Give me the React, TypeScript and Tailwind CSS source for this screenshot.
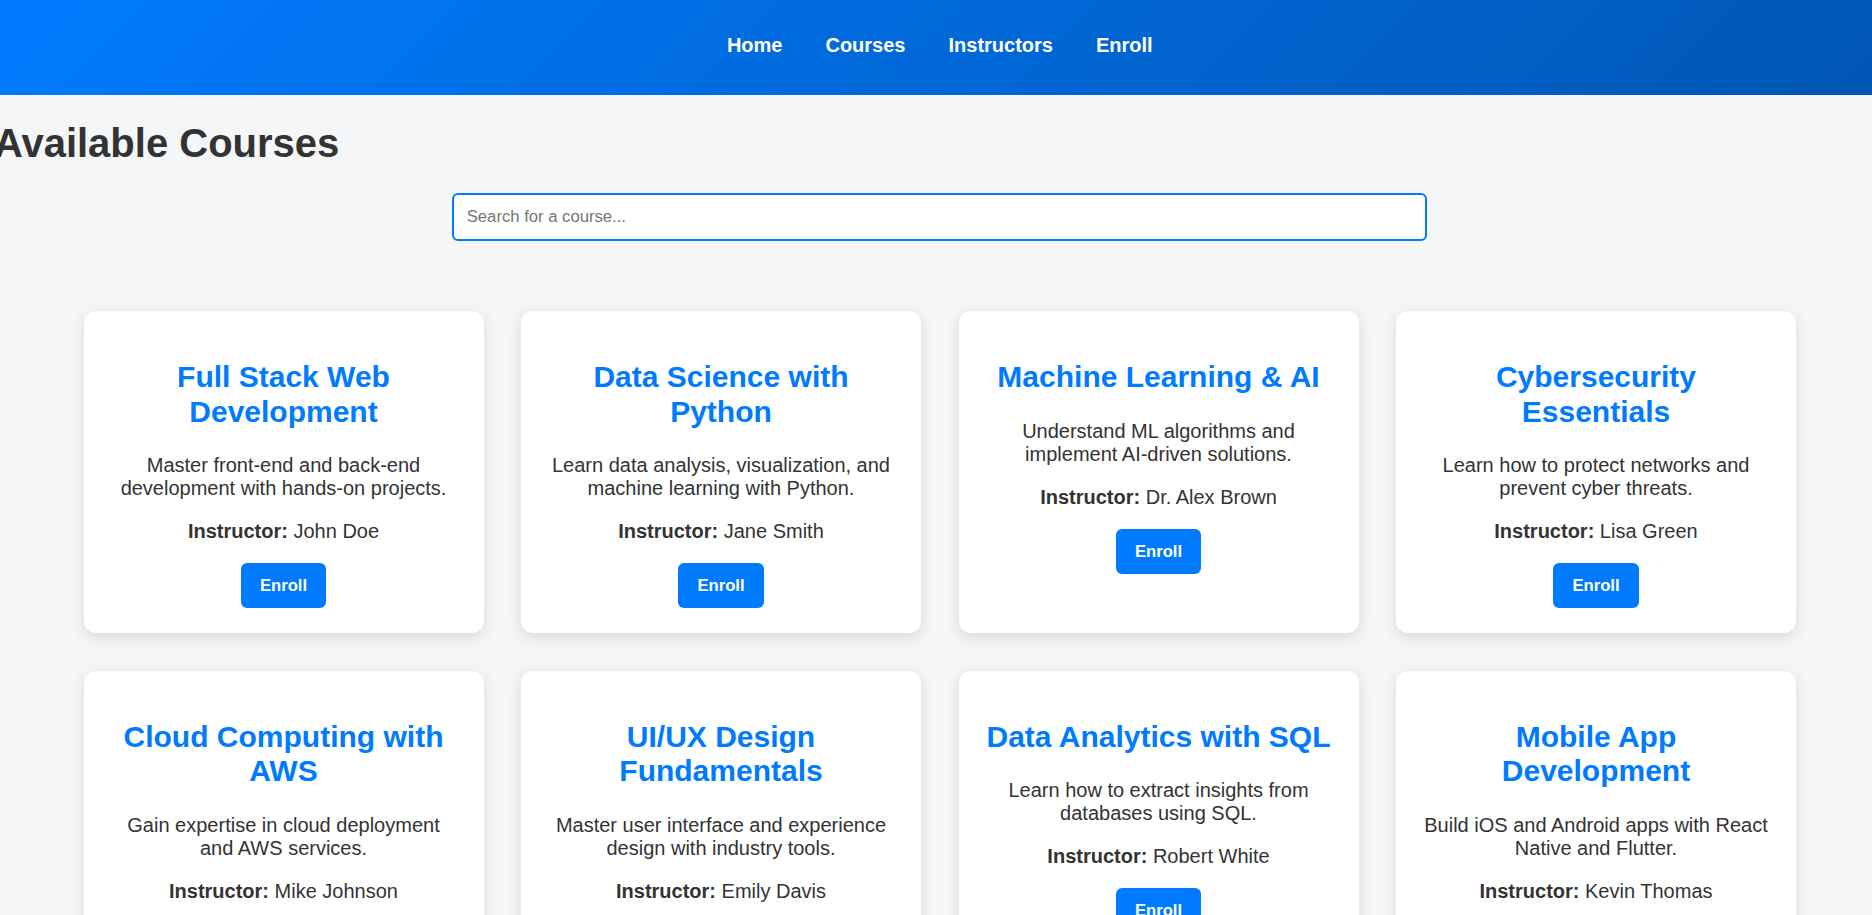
import React from 'react';

type Course = {
  title: string;
  description: string;
  instructor: string;
};

const courses: Course[] = [
  {
    title: 'Full Stack Web Development',
    description: 'Master front-end and back-end development with hands-on projects.',
    instructor: 'John Doe',
  },
  {
    title: 'Data Science with Python',
    description: 'Learn data analysis, visualization, and machine learning with Python.',
    instructor: 'Jane Smith',
  },
  {
    title: 'Machine Learning & AI',
    description: 'Understand ML algorithms and implement AI-driven solutions.',
    instructor: 'Dr. Alex Brown',
  },
  {
    title: 'Cybersecurity Essentials',
    description: 'Learn how to protect networks and prevent cyber threats.',
    instructor: 'Lisa Green',
  },
  {
    title: 'Cloud Computing with AWS',
    description: 'Gain expertise in cloud deployment and AWS services.',
    instructor: 'Mike Johnson',
  },
  {
    title: 'UI/UX Design Fundamentals',
    description: 'Master user interface and experience design with industry tools.',
    instructor: 'Emily Davis',
  },
  {
    title: 'Data Analytics with SQL',
    description: 'Learn how to extract insights from databases using SQL.',
    instructor: 'Robert White',
  },
  {
    title: 'Mobile App Development',
    description: 'Build iOS and Android apps with React Native and Flutter.',
    instructor: 'Kevin Thomas',
  },
];

const links = ['Home', 'Courses', 'Instructors', 'Enroll'];

function CourseCard({ course }: { course: Course }) {
  return (
    <div className="bg-white rounded-[12px] shadow-[0_4px_15px_rgba(0,0,0,0.12)] p-[25px] text-center flex flex-col items-center">
      <h2 className="mt-[24px] mb-[25px] text-[30px] leading-[34.5px] font-bold text-[#007bff]">
        {course.title}
      </h2>
      <p className="text-[20px] leading-[23px] text-[#333]">{course.description}</p>
      <p className="mt-[20px] text-[20px] leading-[23px] text-[#333]">
        <strong className="font-bold">Instructor:</strong> {course.instructor}
      </p>
      <button className="mt-[20px] bg-[#007bff] text-white font-bold text-[16.67px] leading-[19px] px-[19px] py-[13px] rounded-[6px]">
        Enroll
      </button>
    </div>
  );
}

export default function App() {
  return (
    <div className="min-h-screen bg-[#f5f6f8] font-['Liberation_Sans',Arial,sans-serif] text-[#333] overflow-hidden">
      <header className="h-[95px] bg-[linear-gradient(135deg,#007bff,#0056b3)] flex items-center justify-center pl-[7.5px] pb-[5px]">
        <nav className="flex gap-[43px]">
          {links.map((l) => (
            <a key={l} href="#" className="text-white font-bold text-[20px] leading-[23px]">
              {l}
            </a>
          ))}
        </nav>
      </header>

      <h1 className="mt-[25px] -ml-[6px] text-[40px] leading-[46px] font-bold text-[#333]">
        Available Courses
      </h1>

      <div className="mt-[27px] flex justify-center pl-[7.5px]">
        <input
          type="text"
          placeholder="Search for a course..."
          className="w-[975px] h-[48px] bg-white border-2 border-[#007bff] rounded-[6px] px-[12.5px] text-[16.67px] text-[#333] placeholder:text-[#757575] outline-none"
        />
      </div>

      <div className="mt-[70px] pb-[40px] pl-[7.5px] grid grid-cols-[repeat(4,400px)] gap-[37.5px] justify-center">
        {courses.map((c) => (
          <CourseCard key={c.title} course={c} />
        ))}
      </div>
    </div>
  );
}
